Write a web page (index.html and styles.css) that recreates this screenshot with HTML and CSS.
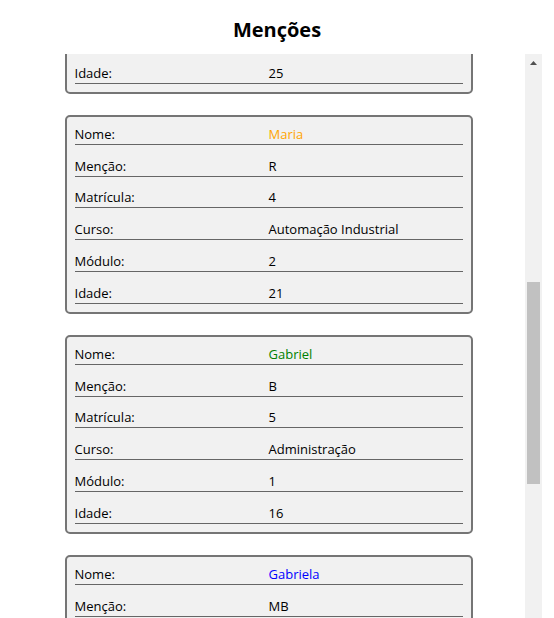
FILE: index.html
```html
<!DOCTYPE html>
<html lang="pt-BR">
<head>
<meta charset="utf-8">
<title>Menções</title>
<link rel="stylesheet" href="styles.css">
</head>
<body>
<header class="header">Menções</header>
<main class="main">
  <div class="list">
    <div class="list-inner">
      <section class="card card-tail">
        <div class="row"><span class="label">Idade:</span><span class="value">25</span></div>
      </section>
      <section class="card">
        <div class="row"><span class="label">Nome:</span><span class="value name-r">Maria</span></div>
        <div class="row"><span class="label">Menção:</span><span class="value">R</span></div>
        <div class="row"><span class="label">Matrícula:</span><span class="value">4</span></div>
        <div class="row"><span class="label">Curso:</span><span class="value">Automação Industrial</span></div>
        <div class="row"><span class="label">Módulo:</span><span class="value">2</span></div>
        <div class="row"><span class="label">Idade:</span><span class="value">21</span></div>
      </section>
      <section class="card">
        <div class="row"><span class="label">Nome:</span><span class="value name-b">Gabriel</span></div>
        <div class="row"><span class="label">Menção:</span><span class="value">B</span></div>
        <div class="row"><span class="label">Matrícula:</span><span class="value">5</span></div>
        <div class="row"><span class="label">Curso:</span><span class="value">Administração</span></div>
        <div class="row"><span class="label">Módulo:</span><span class="value">1</span></div>
        <div class="row"><span class="label">Idade:</span><span class="value">16</span></div>
      </section>
      <section class="card">
        <div class="row"><span class="label">Nome:</span><span class="value name-mb">Gabriela</span></div>
        <div class="row"><span class="label">Menção:</span><span class="value">MB</span></div>
      </section>
    </div>
  </div>
  <div class="scrollbar">
    <div class="sb-button">
      <svg width="7" height="4" viewBox="0 0 7 4"><path d="M3.5 0 L7 4 L0 4 Z" fill="#505050"/></svg>
    </div>
    <div class="sb-thumb"></div>
  </div>
</main>
</body>
</html>
```
FILE: styles.css
```css
html, body {
  margin: 0;
  padding: 0;
  background: #ffffff;
  height: 100%;
  overflow: hidden;
}

body {
  font-family: "Open Sans", "Noto Sans", sans-serif;
  color: #000000;
}

.header {
  box-sizing: border-box;
  height: 54px;
  padding-top: 5px;
  display: flex;
  align-items: center;
  justify-content: center;
  font-size: 20px;
  font-weight: 700;
}

.main {
  display: flex;
  height: calc(100vh - 54px);
  padding: 0 12px;
}

.list {
  flex: 1;
  overflow: hidden;
}

.list-inner {
  display: flex;
  flex-direction: column;
  align-items: center;
  gap: 21.2px;
}

.card {
  box-sizing: border-box;
  width: 408px;
  border: 2px solid #757575;
  border-radius: 5px;
  background: #f1f1f1;
  padding: 0 8px 8px;
  display: flex;
  flex-direction: column;
  gap: 4px;
  flex-shrink: 0;
}

/* the end of the card that is scrolled mostly out of view */
.card-tail {
  margin-top: -10px;
  padding-top: 10px;
}

.row {
  box-sizing: border-box;
  height: 27.8px;
  display: flex;
  align-items: flex-end;
  padding-bottom: 1px;
  border-bottom: 1px solid #666666;
  font-size: 13px;
  line-height: 18px;
}

.label,
.value {
  flex: 1 1 0;
  white-space: nowrap;
}

.name-r { color: #ffa500; }
.name-b { color: #008000; }
.name-mb { color: #0000ff; }

.scrollbar {
  width: 17px;
  background: #f1f1f1;
  display: flex;
  flex-direction: column;
  align-items: center;
}

.sb-button {
  height: 17px;
  width: 17px;
  display: flex;
  align-items: center;
  justify-content: center;
}

.sb-thumb {
  margin-top: 211px;
  width: 13px;
  height: 202px;
  background: #c1c1c1;
}
```
